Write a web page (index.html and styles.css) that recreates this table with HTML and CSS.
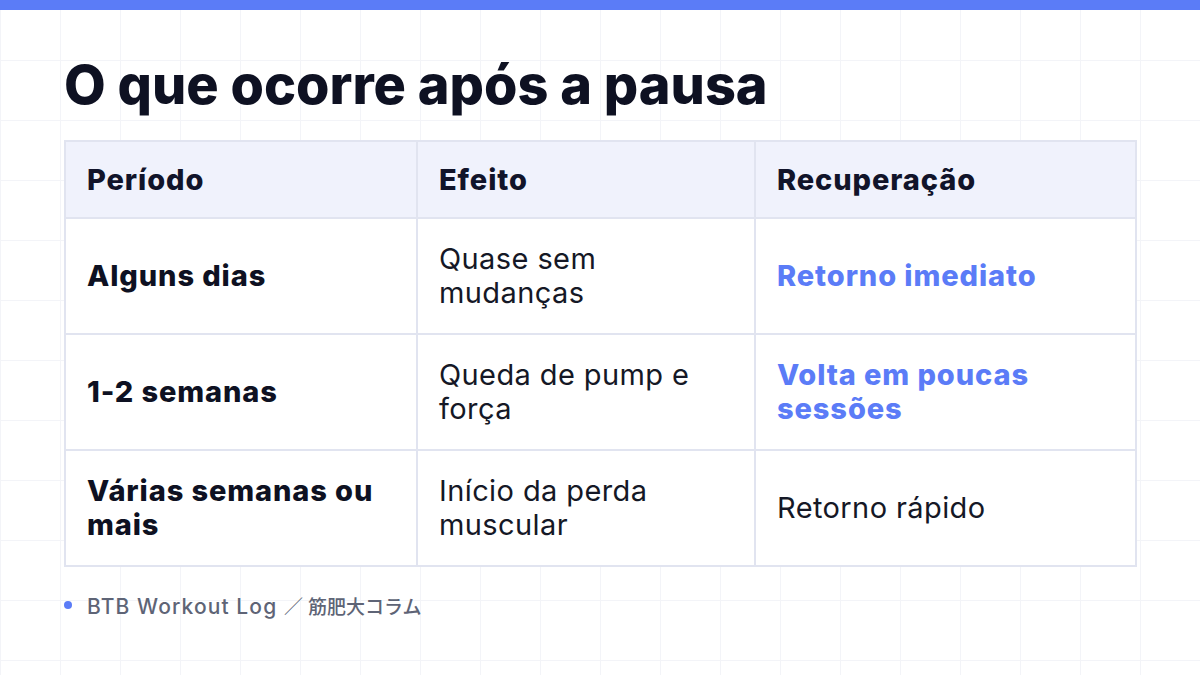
FILE: index.html
```html
<!DOCTYPE html>
<html lang="pt">
<head>
  <meta charset="UTF-8" />
  <meta name="viewport" content="width=device-width, initial-scale=1.0" />
  <title>O que ocorre após a pausa</title>
  <link rel="stylesheet" href="styles.css">
</head>
<body>
  <div class="topbar"></div>
  <main class="slide">
    <h1 class="title">O que ocorre após a pausa</h1>
    <table class="info">
      <colgroup>
        <col class="c1">
        <col class="c2">
        <col class="c3">
      </colgroup>
      <thead>
        <tr>
          <th>Período</th>
          <th>Efeito</th>
          <th>Recuperação</th>
        </tr>
      </thead>
      <tbody>
        <tr>
          <td class="period">Alguns dias</td>
          <td>Quase sem mudanças</td>
          <td class="accent">Retorno imediato</td>
        </tr>
        <tr>
          <td class="period">1-2 semanas</td>
          <td>Queda de pump e força</td>
          <td class="accent">Volta em poucas sessões</td>
        </tr>
        <tr>
          <td class="period">Várias semanas ou mais</td>
          <td>Início da perda muscular</td>
          <td>Retorno rápido</td>
        </tr>
      </tbody>
    </table>
    <footer class="source">
      <span class="dot"></span>
      <span>BTB Workout Log <span class="jp">／ 筋肥大コラム</span></span>
    </footer>
  </main>
</body>
</html>
```

FILE: styles.css
```css
body {
  margin: 0;
  font-family: Inter, "Noto Sans CJK JP", sans-serif;
  color: #11142a;
  background-color: #fff;
  background-image:
    linear-gradient(to right, #f3f4f8 1px, transparent 1px),
    linear-gradient(to bottom, #f3f4f8 1px, transparent 1px);
  background-size: 60px 60px;
  background-position: 0 0;
  width: 1200px;
  height: 675px;
  overflow: hidden;
}
.topbar {
  height: 10px;
  background: #5b7cf7;
}
.slide {
  padding: 43px 65px 0 64px;
}
.title {
  margin: 0 0 22px;
  font-size: 54px;
  line-height: 1.2;
  font-weight: 800;
  color: #0e1122;
}
.info {
  border-collapse: collapse;
  width: 1071px;
  table-layout: fixed;
  background: #fff;
}
.info col.c1 { width: 352px; }
.info col.c2 { width: 338px; }
.info col.c3 { width: 381px; }
.info th,
.info td {
  border: 2px solid #e1e4f0;
  text-align: left;
  font-size: 29px;
  line-height: 34px;
  letter-spacing: 0.9px;
  padding: 23px 21px;
  vertical-align: middle;
}
.info th {
  background: #f0f2fc;
  font-weight: 800;
  padding: 21px 21px 20px;
}
.info td {
  font-weight: 400;
  letter-spacing: 0.4px;
  color: #151826;
  height: 68px;
}
.info td.period {
  font-weight: 800;
  letter-spacing: 0.9px;
  color: #0e1122;
}
.info td.accent {
  font-weight: 800;
  letter-spacing: 0.9px;
  color: #5b7cf7;
}
.source {
  display: flex;
  align-items: center;
  gap: 15px;
  margin-top: 25px;
  font-size: 21px;
  font-weight: 500;
  letter-spacing: 1.1px;
  color: #5e6476;
}
.source .jp {
  font-size: 19px;
  letter-spacing: 0;
}
.dot {
  width: 8px;
  height: 8px;
  border-radius: 50%;
  background: #5b7cf7;
}
```
